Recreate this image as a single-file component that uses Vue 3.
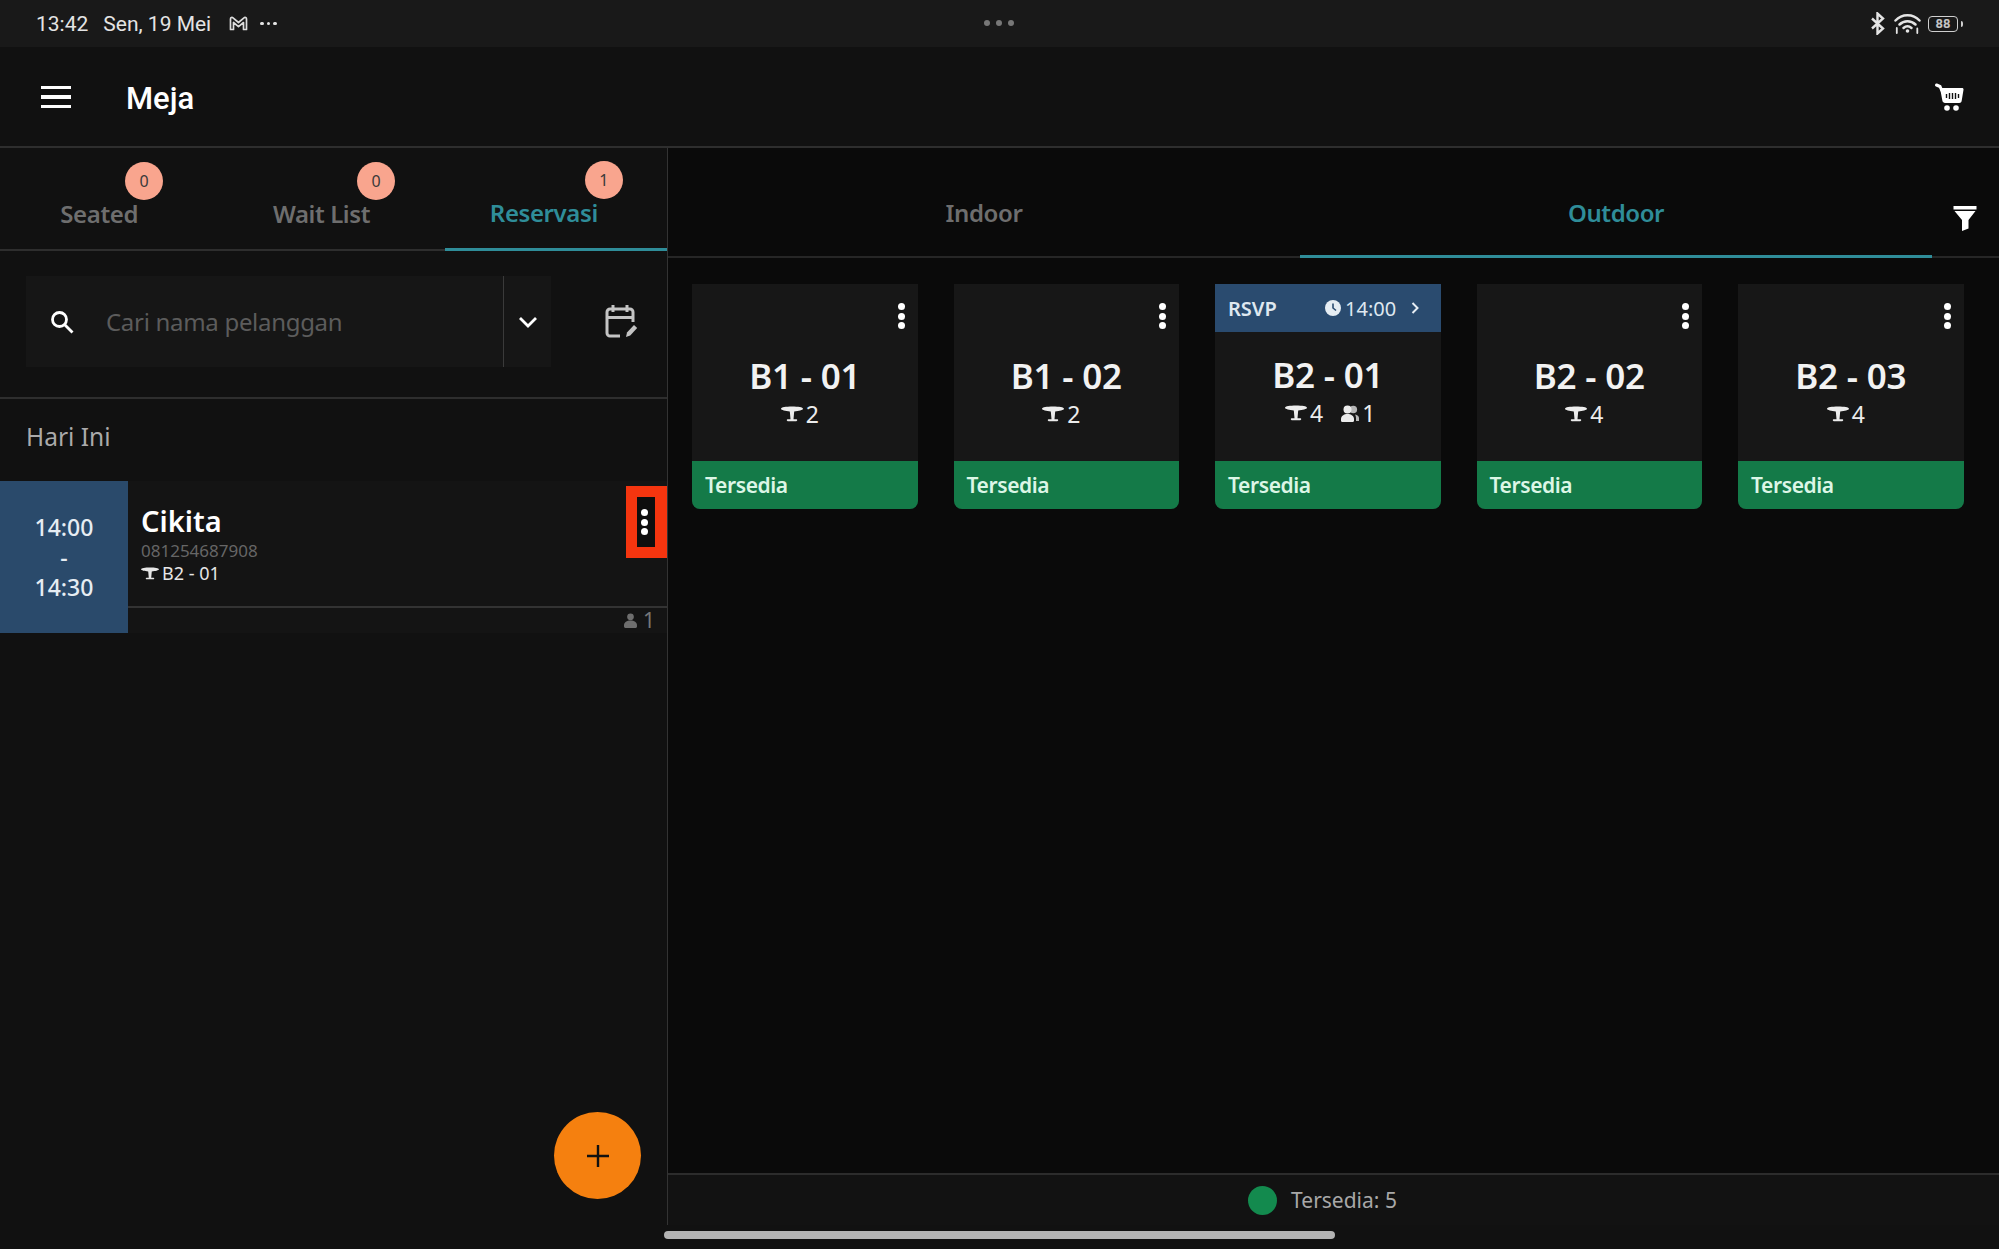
<template>
  <div class="page">
    <svg class="defs" width="0" height="0">
      <symbol id="table" viewBox="0 0 22 16">
        <path d="M0 2.800C0 1.200 5 .5 11 .5s11 .7 11 2.300c0 1.400-4.500 2.300-8.800 2.700l-.7 7.700h2.700c.7 0 1 .4 1 .9s-.3 1.100-1 1.100H6.800c-.7 0-1-.6-1-1.100s.3-.9 1-.9h2.700l-.7-7.700C4.500 5.100 0 4.200 0 2.800z" fill="currentColor" />
      </symbol>
      <symbol id="people" viewBox="0 0 18 17">
        <circle cx="12.300" cy="4.500" r="3.800" fill="currentColor" opacity=".75" />
        <path d="M14 9.500c2.400.4 4 1.600 4 3.500v3h-3v-3c0-1.400-.4-2.600-1-3.500z" fill="currentColor" opacity=".75" />
        <circle cx="6.500" cy="4.500" r="4" fill="currentColor" />
        <path d="M0 14c0-3 3-5 6.500-5s6.500 2 6.500 5v1.500c0 .8-.5 1.500-1.300 1.500H1.300C.5 17 0 16.300 0 15.500z" fill="currentColor" />
      </symbol>
    </svg>

    <div class="statusbar">
      <div class="status-left">
        <span class="clock">13:42</span>
        <span class="date">Sen, 19 Mei</span>
        <svg class="gmail" width="19" height="15" viewBox="0 0 19 15" fill="none" stroke="#ddd" stroke-width="1.700" stroke-linejoin="round">
          <path d="M1.500 13.500V3c0-1.500 1.500-2 2.500-1.200l5.500 4.700L15 1.800c1-.8 2.500-.3 2.500 1.200v10.500h-3V6.500l-5 4.200-5-4.200v7z" />
        </svg>
        <span class="status-dots"><i></i><i></i><i></i></span>
      </div>
      <div class="status-center"><i></i><i></i><i></i></div>
      <div class="status-right">
        <svg width="14" height="23" viewBox="0 0 14 23" fill="none" stroke="#e4e4e4" stroke-width="2.400">
          <path d="M1 6.500l11 10-5.500 5V1.500l5.500 5-11 10" />
        </svg>
        <svg class="wifi" width="27" height="21" viewBox="0 0 27 21" fill="none" stroke="#e4e4e4" stroke-width="2.500" stroke-linecap="round">
          <path d="M1.500 7.500c6.500-7 17.500-7 24 0" />
          <path d="M5.500 11.500c4.500-4.500 11.500-4.500 16 0" />
          <path d="M9.500 15c2.500-2.200 5.500-2.200 8 0" />
          <circle cx="13.500" cy="18" r="1.800" fill="#e4e4e4" stroke="none" />
          <path d="M2.800 15v5M23.300 15.500v4.500" stroke-width="1.800" />
        </svg>
        <div class="battery"><span>88</span></div>
      </div>
    </div>

    <header class="topbar">
      <div class="hamburger"><i></i><i></i><i></i></div>
      <h1>Meja</h1>
      <svg class="cart" width="29" height="29" viewBox="0 0 29 29">
        <path d="M1.500 2l3.500 1.500 1.800 4" fill="none" stroke="#fff" stroke-width="3" stroke-linecap="round" />
        <path d="M5 5h22c1 0 1.700.7 1.500 1.700l-1.800 11c-.2 1.300-1.200 2.300-2.500 2.300H10c-1.300 0-2.300-.9-2.600-2.200z" fill="#fff" />
        <path d="M11.500 11v4M14.500 10v6M17.500 10v6M20.500 10v6M23.500 11v4" stroke="#111" stroke-width="1.400" />
        <circle cx="12" cy="25" r="2.800" fill="#fff" />
        <circle cx="21" cy="25" r="2.800" fill="#fff" />
      </svg>
    </header>

    <main class="content">
      <section class="left">
        <nav class="left-tabs">
          <div v-for="t in leftTabs" :key="t.name" class="left-tab" :class="{ active: t.active }">
            <span class="tab-label">
              {{ t.name }}
              <span class="badge">{{ t.count }}</span>
            </span>
          </div>
        </nav>

        <div class="search-row">
          <div class="search-box">
            <svg class="search-icon" width="26" height="26" viewBox="0 0 26 26" fill="none" stroke="#fff" stroke-width="2.800">
              <circle cx="10.500" cy="10.500" r="7" />
              <path d="M15.500 15.500l8 8" />
            </svg>
            <span class="placeholder">Cari nama pelanggan</span>
            <div class="search-drop">
              <svg width="20" height="12" viewBox="0 0 20 12" fill="none" stroke="#fff" stroke-width="2.800">
                <path d="M2 2l8 8 8-8" />
              </svg>
            </div>
          </div>
          <svg class="cal" width="34" height="36" viewBox="0 0 34 36" fill="none" stroke="#c4c4c4" stroke-width="3">
            <path d="M16 32H6c-1.600 0-3-1.300-3-3V8c0-1.700 1.400-3 3-3h20c1.600 0 3 1.300 3 3v10" />
            <path d="M3 13.500h26M9 1v7M23 1v7" />
            <path d="M22 33l1-4.500 7-7.500 3.200 3-7 7.500z" fill="#c4c4c4" stroke="none" />
          </svg>
        </div>

        <div class="today">Hari Ini</div>

        <div class="resv">
          <div class="resv-time">
            <span>14:00</span>
            <span>-</span>
            <span>14:30</span>
          </div>
          <div class="resv-body">
            <div class="resv-main">
              <div class="resv-info">
                <div class="resv-name">Cikita</div>
                <div class="resv-phone">081254687908</div>
                <div class="resv-table">
                  <svg width="18" height="13"><use href="#table" /></svg>
                  B2 - 01
                </div>
              </div>
              <div class="resv-menu">
                <div class="kebab"><i></i><i></i><i></i></div>
              </div>
            </div>
            <div class="resv-foot">
              <svg width="13" height="15" viewBox="0 0 14 16"><circle cx="7" cy="4" r="3.600" fill="#6e6e6e" /><path d="M0 13c0-3 3-5 7-5s7 2 7 5v1.500c0 .9-.6 1.500-1.500 1.500h-11C.6 16 0 15.400 0 14.500z" fill="#6e6e6e" /></svg>
              <span>1</span>
            </div>
          </div>
        </div>

        <button class="fab">
          <svg width="24" height="24" viewBox="0 0 24 24" stroke="#111" stroke-width="2.400"><path d="M12 1v22M1 12h22" /></svg>
        </button>
      </section>

      <section class="right">
        <nav class="right-tabs">
          <div class="area-tab">Indoor</div>
          <div class="area-tab active">Outdoor</div>
          <svg class="filter" width="24" height="25" viewBox="0 0 24 25">
            <path d="M.5 0h23v3.500H.5zM1.500 5h21l-7 9v8.500L9 25V14z" fill="#fff" />
          </svg>
        </nav>

        <div class="grid">
          <div v-for="c in cards" :key="c.name" class="card">
            <div v-if="c.rsvp" class="rsvp">
              <span class="rsvp-label">RSVP</span>
              <svg class="rsvp-clock" width="16" height="16" viewBox="0 0 16 16">
                <circle cx="8" cy="8" r="8" fill="#e6edf3" />
                <path d="M8 3.500V8l3 2.500" fill="none" stroke="#2a4b6f" stroke-width="1.600" />
              </svg>
              <span class="rsvp-time">{{ c.rsvp }}</span>
              <svg class="rsvp-arrow" width="8" height="12" viewBox="0 0 8 12" fill="none" stroke="#e6edf3" stroke-width="2"><path d="M1.500 1l5 5-5 5" /></svg>
            </div>
            <div v-else class="kebab card-kebab"><i></i><i></i><i></i></div>
            <div class="card-body" :class="{ shifted: c.rsvp }">
              <div class="card-name">{{ c.name }}</div>
              <div class="card-meta">
                <svg width="22" height="16"><use href="#table" /></svg>
                <span>{{ c.seats }}</span>
                <template v-if="c.guests">
                  <svg class="guest-icon" width="18" height="17"><use href="#people" /></svg>
                  <span>{{ c.guests }}</span>
                </template>
              </div>
            </div>
            <div class="card-status">Tersedia</div>
          </div>
        </div>

        <footer class="legend">
          <i class="legend-dot"></i>
          <span>Tersedia: 5</span>
        </footer>
      </section>
    </main>

    <div class="gesture"><i></i></div>
  </div>
</template>

<script setup>
const leftTabs = [
  { name: "Seated", count: 0 },
  { name: "Wait List", count: 0 },
  { name: "Reservasi", count: 1, active: true }
];

const cards = [
  { name: "B1 - 01", seats: 2 },
  { name: "B1 - 02", seats: 2 },
  { name: "B2 - 01", seats: 4, guests: 1, rsvp: "14:00" },
  { name: "B2 - 02", seats: 4 },
  { name: "B2 - 03", seats: 4 }
];
</script>

<style>
html,
body {
  margin: 0;
  background: #0a0a0a;
}
</style>

<style scoped>
.page {
  position: relative;
  width: 1999px;
  height: 1249px;
  overflow: hidden;
  display: flex;
  flex-direction: column;
  background: #111;
  color: #fff;
  font-family: "Noto Sans", "Open Sans", sans-serif;
}

.defs {
  position: absolute;
}

i {
  display: block;
  font-style: normal;
}

/* status bar */
.statusbar {
  height: 47px;
  flex: none;
  display: flex;
  align-items: center;
  justify-content: space-between;
  background: #191919;
  font-family: Roboto, sans-serif;
  font-size: 21px;
  color: #e4e4e4;
  position: relative;
}

.status-left {
  display: flex;
  align-items: center;
  margin-left: 36px;
}

.date {
  margin-left: 15px;
}

.gmail {
  margin-left: 18px;
}

.status-dots {
  display: flex;
  gap: 3px;
  margin-left: 12px;
}

.status-dots i {
  width: 3.500px;
  height: 3.500px;
  border-radius: 50%;
  background: #e4e4e4;
}

.status-center {
  position: absolute;
  left: 984px;
  top: 20px;
  display: flex;
  gap: 6px;
}

.status-center i {
  width: 6px;
  height: 6px;
  border-radius: 50%;
  background: #777;
}

.status-right {
  display: flex;
  align-items: center;
  margin-right: 41px;
}

.wifi {
  margin-left: 9px;
}

.battery {
  position: relative;
  width: 28px;
  height: 14px;
  margin-left: 7px;
  border: 1.500px solid #cfcfcf;
  border-radius: 4px;
  display: flex;
  align-items: center;
  justify-content: center;
  font-size: 13px;
  font-weight: 700;
  color: #c4c4c4;
}

.battery::after {
  content: "";
  position: absolute;
  right: -6px;
  top: 4px;
  width: 2.500px;
  height: 6px;
  border-radius: 0 2px 2px 0;
  background: #cfcfcf;
}

/* header */
.topbar {
  height: 101px;
  flex: none;
  display: flex;
  align-items: center;
  background: #111;
  border-bottom: 2px solid #2e2e2e;
  box-sizing: border-box;
  padding: 1px 35px 0 41px;
}

.hamburger {
  width: 30px;
  display: flex;
  flex-direction: column;
  gap: 6px;
}

.hamburger i {
  height: 3.500px;
  background: #fff;
}

.topbar h1 {
  margin: 2px 0 0 55px;
  font-family: Roboto, sans-serif;
  font-size: 31px;
  font-weight: 500;
  flex: 1;
}

/* left column */
.content {
  flex: 1;
  min-height: 0;
  display: flex;
}

.left {
  position: relative;
  width: 668px;
  flex: none;
  box-sizing: border-box;
  background: #111;
  border-right: 1px solid #333;
}

.left-tabs {
  height: 103px;
  box-sizing: border-box;
  display: grid;
  grid-template-columns: repeat(3, 1fr);
  border-bottom: 2px solid #2e2e2e;
}

.left-tab {
  display: flex;
  align-items: center;
  justify-content: center;
  padding: 0 24px 0 0;
  margin-bottom: -2px;
  font-size: 24px;
  font-weight: 600;
  letter-spacing: -0.4px;
  color: #6e6e6e;
  border-bottom: 3px solid transparent;
}

.left-tab.active {
  color: #2f8d99;
  border-bottom-color: #2f8d99;
}

.tab-label {
  position: relative;
  margin-top: 30px;
}

.left-tab.active .tab-label {
  margin-top: 28px;
}

.badge {
  position: absolute;
  right: -25px;
  top: -35px;
  width: 38px;
  height: 38px;
  border-radius: 50%;
  display: flex;
  align-items: center;
  justify-content: center;
  background: #f9a58e;
  color: #3a3a3a;
  font-size: 16px;
  font-weight: 400;
  letter-spacing: 0;
}

.search-row {
  height: 148px;
  box-sizing: border-box;
  padding: 25px 27px 0 26px;
  display: flex;
  border-bottom: 2px solid #2e2e2e;
}

.search-box {
  width: 525px;
  height: 91px;
  display: flex;
  align-items: center;
  background: #161616;
}

.search-icon {
  margin-left: 23px;
}

.placeholder {
  margin-left: 31px;
  flex: 1;
  font-size: 24px;
  letter-spacing: -0.3px;
  color: #5c5c5c;
}

.search-drop {
  width: 47px;
  height: 100%;
  margin-right: 0;
  border-left: 1px solid #3a3a3a;
  display: flex;
  align-items: center;
  justify-content: center;
}

.cal {
  margin: 28px 0 0 53px;
}

.today {
  height: 82px;
  box-sizing: border-box;
  padding: 18px 0 0 26px;
  font-size: 24.500px;
  line-height: 40px;
  color: #aaa;
}

.resv {
  height: 152px;
  display: flex;
  background: #141414;
}

.resv-time {
  width: 128px;
  flex: none;
  display: flex;
  flex-direction: column;
  align-items: center;
  justify-content: center;
  background: #2a4a6b;
  color: #e6edf3;
  font-size: 23px;
  font-weight: 500;
  line-height: 30px;
}

.resv-body {
  flex: 1;
  display: flex;
  flex-direction: column;
}

.resv-main {
  height: 127px;
  flex: none;
  box-sizing: border-box;
  display: flex;
  justify-content: space-between;
  border-bottom: 2px solid #333;
}

.resv-info {
  padding: 20px 0 0 13px;
}

.resv-name {
  font-size: 29px;
  font-weight: 600;
  line-height: 40px;
}

.resv-phone {
  font-size: 17px;
  line-height: 24px;
  margin-top: -2px;
  color: #666;
}

.resv-table {
  display: flex;
  align-items: center;
  gap: 3px;
  font-size: 18px;
  line-height: 21px;
  color: #e6e6e6;
}

.resv-menu {
  width: 41px;
  height: 72px;
  margin-top: 5px;
  box-sizing: border-box;
  border: 11px solid #f5350f;
  border-right-width: 12px;
  background: #0e0e0e;
  display: flex;
  align-items: center;
  justify-content: center;
}

.resv-menu .kebab {
  margin-right: 3px;
}

.resv-foot {
  flex: 1;
  min-height: 0;
  display: flex;
  align-items: center;
  justify-content: flex-end;
  gap: 6px;
  padding-right: 12px;
  font-size: 21px;
  line-height: 25px;
  color: #777;
}

.kebab {
  display: flex;
  flex-direction: column;
  gap: 2.500px;
}

.kebab i {
  width: 7px;
  height: 7px;
  border-radius: 50%;
  background: #fff;
}

.fab {
  position: absolute;
  left: 554px;
  top: 964px;
  width: 87px;
  height: 87px;
  padding: 0;
  border: none;
  border-radius: 50%;
  display: flex;
  align-items: center;
  justify-content: center;
  background: #f5800f;
}

/* right column */
.right {
  flex: 1;
  min-width: 0;
  display: flex;
  flex-direction: column;
  background: #0a0a0a;
}

.right-tabs {
  position: relative;
  height: 110px;
  flex: none;
  box-sizing: border-box;
  display: flex;
  padding-right: 67px;
  border-bottom: 2px solid #262626;
}

.area-tab {
  flex: 1;
  display: flex;
  align-items: center;
  justify-content: center;
  padding-top: 21px;
  margin-bottom: -2px;
  box-sizing: border-box;
  font-size: 24px;
  font-weight: 600;
  letter-spacing: -0.4px;
  color: #6e6e6e;
  border-bottom: 3px solid transparent;
}

.area-tab.active {
  color: #2f8d99;
  border-bottom-color: #2f8d99;
}

.filter {
  position: absolute;
  right: 22px;
  top: 58px;
}

.grid {
  flex: 1;
  display: grid;
  grid-template-columns: repeat(5, 225.500px);
  column-gap: 36px;
  align-content: start;
  padding: 26px 0 0 24px;
}

.card {
  position: relative;
  height: 225px;
  display: flex;
  flex-direction: column;
  background: #171717;
  border-radius: 0 0 8px 8px;
  overflow: hidden;
}

.card-kebab {
  position: absolute;
  right: 13px;
  top: 19px;
}

.rsvp {
  height: 48px;
  flex: none;
  display: flex;
  align-items: center;
  padding-left: 13px;
  background: #2a4b6f;
  color: #dfe8f0;
  font-size: 20px;
}

.rsvp-label {
  font-weight: 600;
  width: 97px;
}

.rsvp-time {
  margin-left: 4px;
}

.rsvp-arrow {
  margin-left: 15px;
}

.card-body {
  flex: 1;
  display: flex;
  flex-direction: column;
  align-items: center;
  justify-content: flex-start;
  padding-top: 67px;
}

.card-body .card-meta {
  margin-right: 10px;
}

.card-body.shifted {
  padding-top: 18px;
}

.card-body.shifted .card-meta {
  margin-right: 0;
  margin-left: 5px;
}

.card-name {
  font-size: 35px;
  font-weight: 600;
  line-height: 50px;
  letter-spacing: -0.2px;
  color: #f2f2f2;
}

.card-meta {
  display: flex;
  align-items: center;
  gap: 3px;
  margin-top: -1px;
  font-size: 23px;
  line-height: 28px;
  color: #ececec;
}

.guest-icon {
  margin-left: 15px;
}

.card-status {
  height: 48px;
  flex: none;
  display: flex;
  align-items: center;
  padding-left: 13px;
  background: #147a48;
  color: #dcf6e6;
  font-size: 21px;
  font-weight: 600;
  letter-spacing: -0.4px;
}

.legend {
  height: 76px;
  flex: none;
  box-sizing: border-box;
  display: flex;
  align-items: center;
  justify-content: center;
  gap: 14px;
  padding: 0 22px 24px 0;
  border-top: 2px solid #2c2c2c;
  background: #121212;
  font-size: 21px;
  color: #a8a8a8;
}

.legend-dot {
  width: 29px;
  height: 29px;
  border-radius: 50%;
  background: #138a4e;
}

/* gesture strip */
.gesture {
  position: absolute;
  left: 0;
  right: 0;
  bottom: 0;
  height: 24px;
  background: #111;
}

.gesture i {
  position: absolute;
  left: 664px;
  top: 6px;
  width: 671px;
  height: 8px;
  border-radius: 4px;
  background: #b3b3b3;
}
</style>
